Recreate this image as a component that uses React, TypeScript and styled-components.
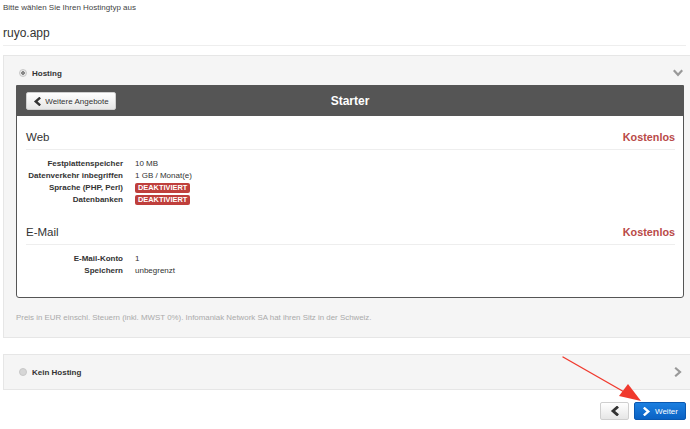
import styled, { createGlobalStyle } from "styled-components";

const GlobalStyle = createGlobalStyle`
  html, body {
    margin: 0;
    padding: 0;
    background: #fff;
    overflow: hidden;
  }
  body {
    font-family: "Liberation Sans", Arial, sans-serif;
    color: #333;
  }
`;

const Page = styled.div`
  position: relative;
  padding: 0 4px 0 3px;
  width: 690px;
  box-sizing: border-box;
`;

const Intro = styled.p`
  margin: 2px 0 0;
  font-size: 8px;
  line-height: 12px;
  color: #444;
`;

const Domain = styled.div`
  margin-top: 11px;
  font-size: 12px;
  line-height: 16px;
  padding-bottom: 4px;
  border-bottom: 1px solid #eee;
  color: #333;
`;

const Panel = styled.div<{ $top: number }>`
  margin-top: ${({ $top }) => $top}px;
  margin-right: -4px;
  background: #f5f5f5;
  border: 1px solid #e6e6e6;
  border-right: none;
  padding: ${({ $top }) => ($top > 12 ? "9px 6px 9px 12px" : "9px 6px 13px 12px")};
`;

const OptionRow = styled.div`
  display: flex;
  align-items: center;
  height: 16px;
  font-size: 8px;
  font-weight: bold;
  color: #333;
`;

const Radio = styled.span<{ $checked?: boolean }>`
  width: 6px;
  height: 6px;
  border-radius: 50%;
  margin: 0 5px 0 3px;
  background: ${({ $checked }) =>
    $checked ? "radial-gradient(circle, #888 0 1.6px, #e8e8e8 2px)" : "#d6d6d6"};
  border: 1px solid #c8c8c8;
`;

const OptionLabel = styled.span`
  flex: 1;
`;

const Toggle = styled.span`
  color: #999;
  display: flex;
  align-items: center;
  padding-right: 1px;
`;

const Card = styled.div`
  margin-top: 4px;
  border: 1px solid #555;
  border-radius: 0 0 3px 3px;
  background: #fff;
`;

const CardHeader = styled.div`
  background: #555;
  height: 30px;
  display: grid;
  grid-template-columns: 1fr auto 1fr;
  align-items: center;
  padding: 0 9px;
`;

const Title = styled.div`
  color: #fff;
  font-size: 12px;
  font-weight: bold;
`;

const Button = styled.button<{ $primary?: boolean }>`
  display: inline-flex;
  align-items: center;
  justify-content: center;
  gap: 4px;
  height: 18px;
  padding: 0 4px;
  white-space: nowrap;
  font-family: "Liberation Sans", Arial, sans-serif;
  font-size: 8px;
  border-radius: 2px;
  cursor: pointer;
  color: ${({ $primary }) => ($primary ? "#fff" : "#333")};
  background: ${({ $primary }) =>
    $primary
      ? "linear-gradient(#1c7fe0, #0a62c4)"
      : "linear-gradient(#ffffff, #e6e6e6)"};
  border: 1px solid ${({ $primary }) => ($primary ? "#0a58b0" : "#cfcfcf")};
`;

const BackButton = styled(Button)`
  justify-self: start;
  width: 90px;
  gap: 3px;
`;

const CardBody = styled.div`
  padding: 11px 8px 20px 9px;
`;

const Section = styled.div`
  & + & {
    margin-top: 16px;
  }
`;

const SectionHead = styled.div`
  display: flex;
  justify-content: space-between;
  align-items: center;
  height: 20px;
  padding-bottom: 2px;
  border-bottom: 1px solid #eee;
  margin-bottom: 8px;
`;

const SectionTitle = styled.div`
  font-size: 11.5px;
  color: #333;
`;

const Price = styled.div`
  font-size: 10.8px;
  font-weight: bold;
  color: #b94a48;
`;

const Specs = styled.dl`
  margin: 0;
  display: grid;
  grid-template-columns: 97px auto;
  column-gap: 12px;
  font-size: 8px;
  line-height: 12px;
`;

const Term = styled.dt`
  text-align: right;
  font-weight: bold;
  color: #333;
`;

const Value = styled.dd`
  margin: 0;
  color: #333;
  display: flex;
  align-items: center;
`;

const Badge = styled.span`
  background: #bf3f3c;
  color: #fff;
  font-weight: bold;
  font-size: 7.4px;
  line-height: 10px;
  padding: 0 3px;
  border-radius: 2px;
`;

const Note = styled.p`
  margin: 14px 0 0;
  font-size: 7.9px;
  line-height: 12px;
  color: #aaa;
`;

const Actions = styled.div`
  display: flex;
  justify-content: flex-end;
  gap: 5px;
  margin-top: 12px;
`;

const PrevButton = styled(Button)`
  width: 29px;
`;

const NextButton = styled(Button)`
  width: 52px;
`;

const Arrow = styled.svg`
  position: absolute;
  left: 0;
  top: 0;
  pointer-events: none;
`;

type Dir = "left" | "right" | "down";

const chevronPoints: Record<Dir, string> = {
  left: "7,1.5 3,5 7,8.5",
  right: "3,1.5 7,5 3,8.5",
  down: "1.5,3 5,6.8 8.5,3",
};

const Chevron = ({ dir, size = 9, weight = 2.4 }: { dir: Dir; size?: number; weight?: number }) => (
  <svg width={size} height={size} viewBox="0 0 10 10">
    <polyline
      points={chevronPoints[dir]}
      fill="none"
      stroke="currentColor"
      strokeWidth={weight}
      strokeLinecap="square"
      strokeLinejoin="miter"
    />
  </svg>
);

type Spec = { label: string; value?: string; badge?: string };

const web: Spec[] = [
  { label: "Festplattenspeicher", value: "10 MB" },
  { label: "Datenverkehr inbegriffen", value: "1 GB / Monat(e)" },
  { label: "Sprache (PHP, Perl)", badge: "DEAKTIVIERT" },
  { label: "Datenbanken", badge: "DEAKTIVIERT" },
];

const mail: Spec[] = [
  { label: "E-Mail-Konto", value: "1" },
  { label: "Speichern", value: "unbegrenzt" },
];

const SpecList = ({ items }: { items: Spec[] }) => (
  <Specs>
    {items.flatMap((item) => [
      <Term key={item.label}>{item.label}</Term>,
      <Value key={item.label + "-v"}>
        {item.badge ? <Badge>{item.badge}</Badge> : item.value}
      </Value>,
    ])}
  </Specs>
);

export default function App() {
  return (
    <>
      <GlobalStyle />
      <Page>
        <Intro>Bitte wählen Sie Ihren Hostingtyp aus</Intro>
        <Domain>ruyo.app</Domain>

        <Panel $top={9}>
          <OptionRow>
            <Radio $checked />
            <OptionLabel>Hosting</OptionLabel>
            <Toggle>
              <Chevron dir="down" size={10} weight={2.2} />
            </Toggle>
          </OptionRow>
          <Card>
            <CardHeader>
              <BackButton>
                <Chevron dir="left" size={9} weight={2.6} />
                Weitere Angebote
              </BackButton>
              <Title>Starter</Title>
              <span />
            </CardHeader>
            <CardBody>
              <Section>
                <SectionHead>
                  <SectionTitle>Web</SectionTitle>
                  <Price>Kostenlos</Price>
                </SectionHead>
                <SpecList items={web} />
              </Section>
              <Section>
                <SectionHead>
                  <SectionTitle>E-Mail</SectionTitle>
                  <Price>Kostenlos</Price>
                </SectionHead>
                <SpecList items={mail} />
              </Section>
            </CardBody>
          </Card>
          <Note>
            Preis in EUR einschl. Steuern (inkl. MWST 0%). Infomaniak Network SA hat ihren Sitz in der Schweiz.
          </Note>
        </Panel>

        <Panel $top={16}>
          <OptionRow>
            <Radio />
            <OptionLabel>Kein Hosting</OptionLabel>
            <Toggle>
              <Chevron dir="right" size={10} weight={2.2} />
            </Toggle>
          </OptionRow>
        </Panel>

        <Actions>
          <PrevButton>
            <Chevron dir="left" size={10} weight={2.8} />
          </PrevButton>
          <NextButton $primary>
            <Chevron dir="right" size={9} weight={2.6} />
            Weiter
          </NextButton>
        </Actions>

        <Arrow width="690" height="429" viewBox="0 0 690 429">
          <line x1="563" y1="355" x2="626" y2="391" stroke="#f03a2e" strokeWidth="1.4" strokeLinecap="round" />
          <polygon points="641,399 619,394 628,382" fill="#f03a2e" />
        </Arrow>
      </Page>
    </>
  );
}
